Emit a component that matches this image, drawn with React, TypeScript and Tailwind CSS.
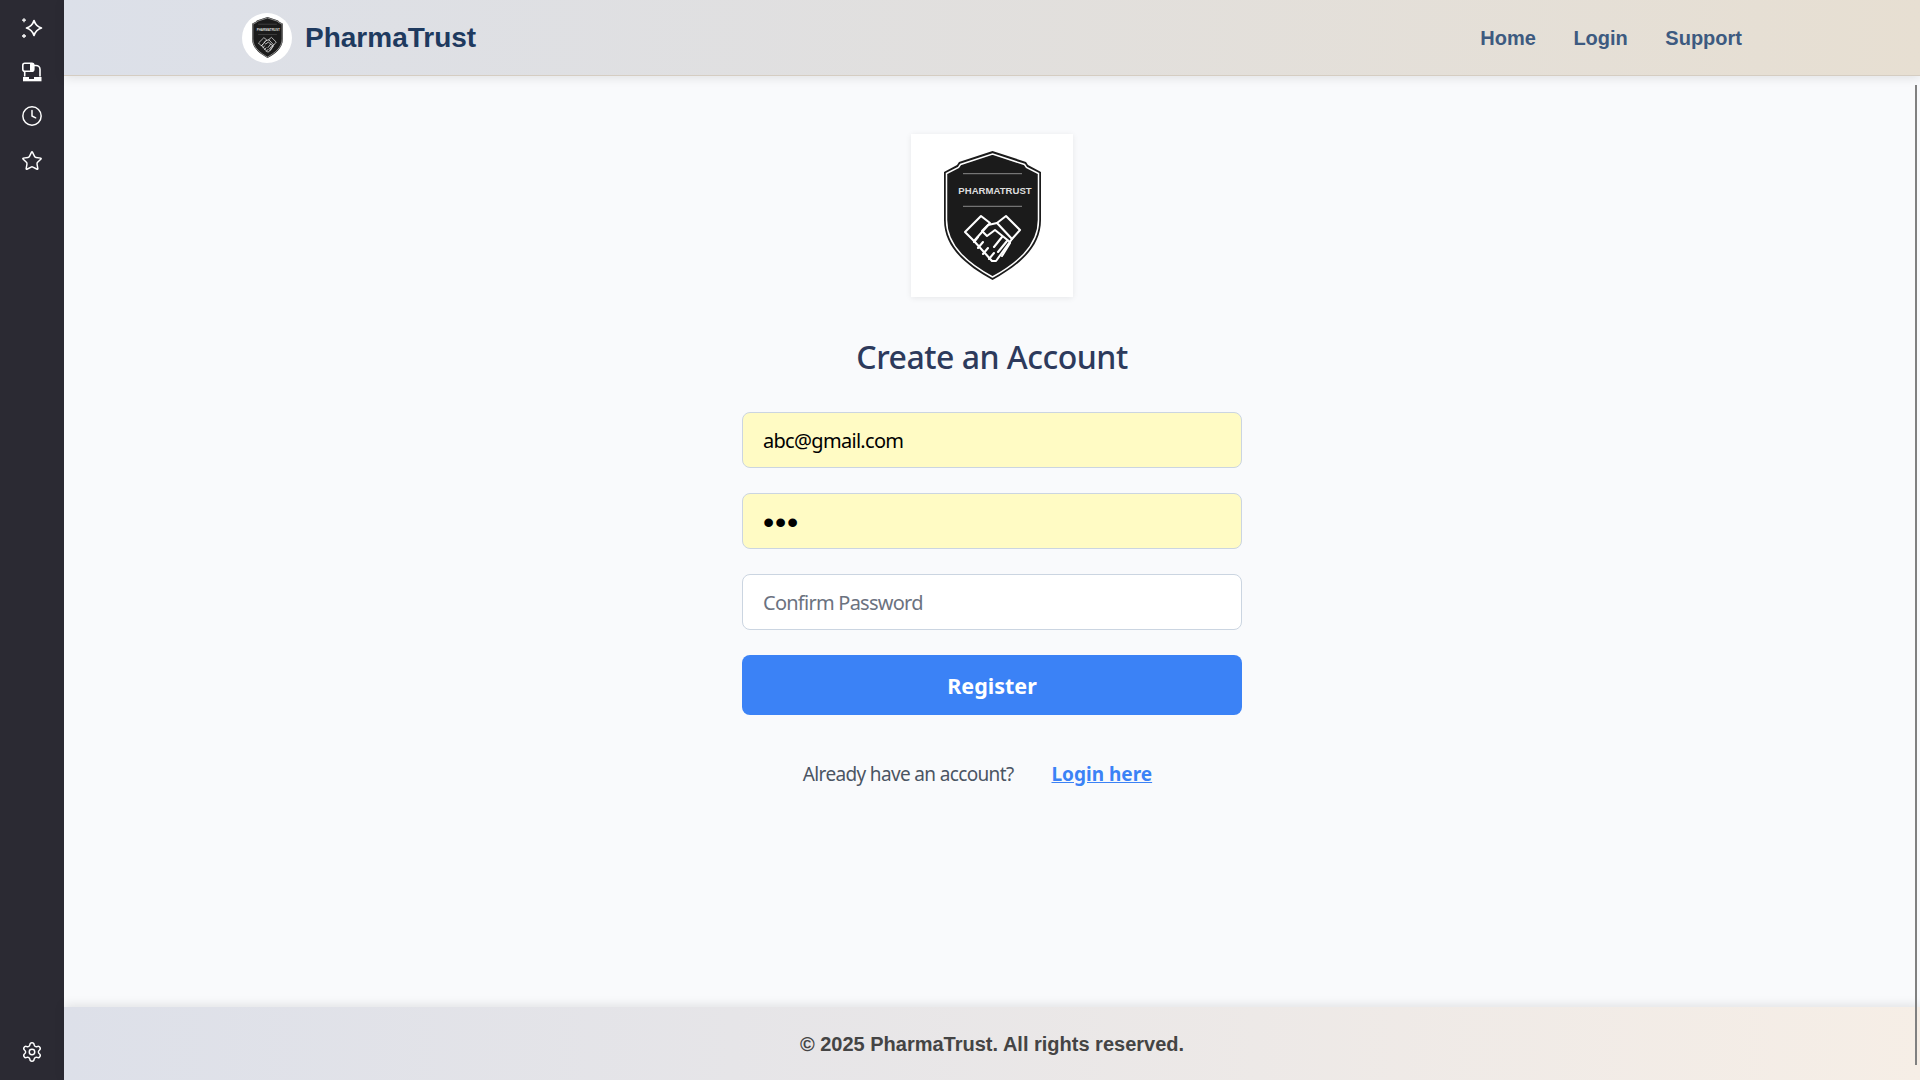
import React from 'react';
import { Clock, Settings, Star } from 'lucide-react';

const bodyFont = "font-['Noto_Sans',sans-serif]";

// Shield logo with the handshake, also used small in the header
const ShieldLogo = ({ className = '' }: { className?: string }) => (
  <svg viewBox="0 0 97 129" className={className}>
    <path d="M48.5 0 L82 11 L84 14 L97 21 L97 69 C97 98 72 116 48.5 129 C25 116 0 98 0 69 L0 21 L13 14 L15 11 Z" fill="#1b1b1b" />
    <path
      d="M48.5 3 L80.5 13.5 L82.5 16.5 L94.5 22.5 L94.5 69 C94.5 96 71 113.5 48.5 126 C26 113.5 2.5 96 2.5 69 L2.5 22.5 L14.5 16.5 L16.5 13.5 Z"
      fill="none"
      stroke="#fff"
      strokeWidth="1.5"
    />
    <path d="M19 22.7 H78 M19 55.3 H78" stroke="#8a8a8a" strokeWidth="1" />
    <text x="51" y="42.5" textAnchor="middle" fontFamily="Liberation Sans" fontWeight="700" fontSize="9.6" fill="#dedede">
      PHARMATRUST
    </text>
    <g fill="none" stroke="#fff" strokeWidth="2.1" strokeLinejoin="round" strokeLinecap="round">
      {/* cuffs */}
      <path d="M21 81 L37 65 L46 72 L30 90 Z" />
      <path d="M62 65 L76 79 L68 88 L53 72 Z" />
      {/* thumb and palm */}
      <path d="M53 72 L44 74 L38 80 L43 85 L51 79 L66 91" />
      {/* fingers */}
      <path d="M30 90 L48 110 L52 110 L68 88" />
      <path d="M34 86 L30 91 M39 91 L34 97 M44 97 L39 103 M50 102 L45 108 M58 86 L50 96 M63 90 L54 101 M66 92 L58 105" />
    </g>
  </svg>
);

// Four-point star with two small plus marks
const SparkleIcon = () => (
  <svg viewBox="0 0 22 22" className="h-[22px] w-[22px]" fill="none" stroke="#fff" strokeWidth="1.7" strokeLinejoin="round">
    <path d="M13 4.5 Q14.8 10.2 20.5 12 Q14.8 13.8 13 19.5 Q11.2 13.8 5.5 12 Q11.2 10.2 13 4.5 Z" />
    <path d="M3 2.2 V6.2 M1 4.2 H5 M3 18 V22 M1 20 H5" strokeWidth="1.3" />
  </svg>
);

// Webcam-like icon of the browser side bar
const CameraIcon = () => (
  <svg viewBox="-1 -1.5 22 22" className="h-[22px] w-[22px]" fill="none" stroke="#fff" strokeWidth="1.6">
    <rect x="0.8" y="0.8" width="11" height="8" rx="2" />
    <rect x="8" y="0.8" width="3.8" height="8" rx="1" fill="#fff" strokeWidth="0" />
    <path d="M11.8 3 H14 a4 4 0 0 1 4 4 V14" />
    <path d="M2.7 8.8 V14" />
    <path d="M1 14.5 H19.5 V18.8 H1 Z" fill="#fff" strokeWidth="0" />
    <rect x="7" y="14.5" width="5" height="2" fill="#2b2a33" strokeWidth="0" />
  </svg>
);

const SideBar = () => (
  <aside className="flex h-full w-16 shrink-0 flex-col items-center justify-between bg-[#2b2a33] pb-[17px] pt-[16px]">
    <div className="flex flex-col items-center gap-[22.5px] text-white">
      <SparkleIcon />
      <CameraIcon />
      <Clock className="h-[22px] w-[22px]" strokeWidth={1.6} />
      <Star className="h-[22px] w-[22px]" strokeWidth={1.6} />
    </div>
    <Settings className="h-[22px] w-[22px] text-white" strokeWidth={1.6} />
  </aside>
);

const Header = () => (
  <header className="z-10 h-[76px] shrink-0 border-b border-[#d5cdc2] bg-gradient-to-r from-[#dce0e9] to-[#e7dfd2] shadow-[0_2px_10px_rgba(0,0,0,0.1)]">
    <div className="mx-auto flex h-full w-[1500px] items-center justify-between font-['Liberation_Sans',sans-serif] font-bold">
      <div className="flex items-center gap-[13px]">
        <div className="flex h-[50px] w-[50px] items-center justify-center rounded-full bg-white">
          <ShieldLogo className="h-[41px] w-[31px]" />
        </div>
        <span className="text-[28px] text-[#1e3a5f]">PharmaTrust</span>
      </div>
      <nav className="flex gap-[37.5px] pt-[1px] text-[20px] text-[#3d5a80]">
        <a>Home</a>
        <a>Login</a>
        <a>Support</a>
      </nav>
    </div>
  </header>
);

const fieldClass =
  'h-14 w-full rounded-lg border border-[#cbd5e1] px-5 text-black outline-none placeholder:text-[#6b7280]';

const RegisterForm = () => (
  <main className={`flex min-h-0 flex-1 flex-col items-center bg-[#f9fafc] pt-[58px] ${bodyFont}`}>
    <div className="flex h-[163px] w-[162px] items-center justify-center bg-white shadow-[0_1px_6px_rgba(0,0,0,0.08)]">
      <ShieldLogo className="h-[129px] w-[97px]" />
    </div>
    <h2 className="mt-[38px] text-[32px] font-medium leading-[44px] tracking-[-0.5px] text-[#2d3a5c]">
      Create an Account
    </h2>
    <form className="mt-[33px] flex w-[500px] flex-col gap-[25px]">
      <input type="email" readOnly value="abc@gmail.com" className={`${fieldClass} bg-[#fffbc4] text-[20px] tracking-[-0.7px]`} />
      <input
        type="password"
        readOnly
        value="abc"
        className={`${fieldClass} bg-[#fffbc4] pt-[3px] font-['Liberation_Sans',sans-serif] text-[32px] tracking-[0.8px]`}
      />
      <input type="password" readOnly placeholder="Confirm Password" className={`${fieldClass} bg-white text-[20px] tracking-[-0.75px]`} />
      <button type="button" className="h-[60px] rounded-lg bg-[#3b82f6] pt-[2px] text-[21.5px] font-bold text-white">
        Register
      </button>
    </form>
    <p className="mt-[46px] flex gap-[38px] pr-[29px] text-[19px] leading-[26px] text-[#4b5563]">
      <span className="tracking-[-0.65px]">Already have an account?</span>
      <a className="font-bold text-[#3b82f6] underline">Login here</a>
    </p>
  </main>
);

const Footer = () => (
  <footer className="z-10 flex h-[73px] shrink-0 items-center justify-center bg-gradient-to-r from-[#dde0e9] to-[#f6eee6] font-['Liberation_Sans',sans-serif] text-[20px] font-bold text-[#444444] shadow-[0_-2px_10px_rgba(0,0,0,0.1)]">
    © 2025 PharmaTrust. All rights reserved.
  </footer>
);

export default function App() {
  return (
    <div className="relative flex h-screen w-full overflow-hidden">
      <SideBar />
      <div className="flex min-w-0 flex-1 flex-col">
        <Header />
        <RegisterForm />
        <Footer />
      </div>
      {/* overlay scrollbar thumb */}
      <div className="absolute bottom-[15px] right-[3px] top-[85px] z-20 w-[2px] bg-[#808080]" />
    </div>
  );
}
